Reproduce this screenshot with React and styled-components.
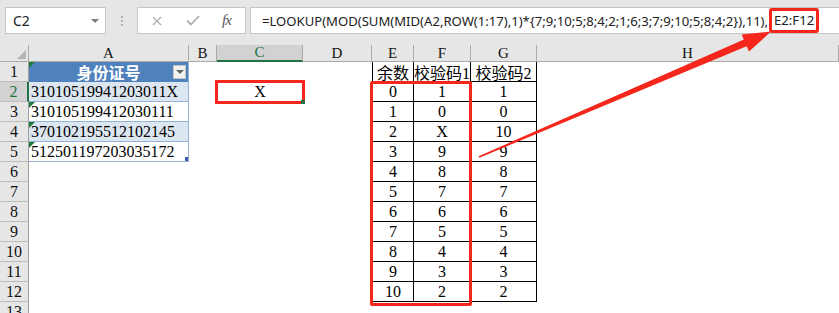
import React from 'react'
import styled, { createGlobalStyle, css } from 'styled-components'

const RED = '#f5261c'
const GREEN = '#217346'

const GlobalStyle = createGlobalStyle`
  html, body {
    margin: 0;
    padding: 0;
    overflow: hidden;
    background: #fff;
  }
  body {
    font-family: "Liberation Serif", "Noto Sans CJK SC", serif;
  }
`

const place = css`
  grid-row: ${p => p.$r};
  grid-column: ${p => p.$c};
`

const Page = styled.div`
  position: relative;
  width: 839px;
  height: 313px;
  overflow: hidden;
`

const TopBar = styled.div`
  height: 45px;
  box-sizing: border-box;
  background: #e6e6e6;
  display: flex;
  align-items: flex-start;
  padding: 7px 0 0 5px;
`

const NameBox = styled.div`
  width: 101px;
  height: 27px;
  box-sizing: border-box;
  background: #fff;
  border: 1px solid #c6c6c6;
  display: flex;
  align-items: center;
  justify-content: space-between;
  padding: 0 6px 0 7px;
  font: 14px "Noto Sans", "Liberation Sans", sans-serif;
  color: #222;
`

const Caret = styled.span`
  width: 0;
  height: 0;
  border-top: 4px solid #7a7a7a;
  border-left: 4px solid transparent;
  border-right: 4px solid transparent;
`

const Grip = styled.div`
  width: 31px;
  height: 27px;
  display: flex;
  flex-direction: column;
  align-items: center;
  justify-content: center;
  gap: 2px;
  span {
    width: 2px;
    height: 2px;
    background: #b3b3b3;
  }
`

const FxBox = styled.div`
  width: 109px;
  height: 27px;
  box-sizing: border-box;
  background: #fff;
  border: 1px solid #c6c6c6;
  display: flex;
  align-items: center;
  padding-left: 14px;
  svg.cancel { margin-right: 24px; }
  svg.enter { margin-right: 22px; }
`

const Fx = styled.span`
  font: italic 15px "Liberation Serif", serif;
  color: #555;
  letter-spacing: -1px;
`

const FormulaBox = styled.div`
  flex: 1;
  height: 27px;
  margin-left: 4px;
  box-sizing: border-box;
  background: #fff;
  border: 1px solid #c6c6c6;
  border-right: none;
  display: flex;
  align-items: center;
  padding-left: 11px;
  white-space: nowrap;
  overflow: hidden;
  font: 13.1px "Noto Sans", "Liberation Sans", sans-serif;
  color: #222;
`

const RangeRef = styled.span`
  display: inline-block;
  border: 3px solid ${RED};
  border-radius: 3px;
  padding: 0 2px;
  margin-left: 1px;
  line-height: 19px;
`

const Sheet = styled.div`
  display: grid;
  grid-template-columns: 29px 160px 28px 86px 69px 42px 57px 66px 1fr;
  grid-template-rows: 17px repeat(13, 20px);
`

const Corner = styled.div`
  ${place};
  background: #e6e6e6;
  border-right: 1px solid #ababab;
  border-bottom: 1px solid #ababab;
  position: relative;
  &::after {
    content: '';
    position: absolute;
    right: 2px;
    bottom: 2px;
    border-bottom: 9px solid #b4b4b4;
    border-left: 9px solid transparent;
  }
`

const ColHead = styled.div`
  ${place};
  background: ${p => (p.$active ? '#d2d2d2' : '#e6e6e6')};
  color: ${p => (p.$active ? GREEN : '#111')};
  border-right: 1px solid #ababab;
  border-bottom: ${p => (p.$active ? `2px solid ${GREEN}` : '1px solid #ababab')};
  display: flex;
  align-items: center;
  justify-content: center;
  font-size: 15px;
  line-height: 1;
`

const RowHead = styled.div`
  ${place};
  background: ${p => (p.$active ? '#d2d2d2' : '#e6e6e6')};
  color: ${p => (p.$active ? GREEN : '#111')};
  border-right: ${p => (p.$active ? `2px solid ${GREEN}` : '1px solid #9e9e9e')};
  border-bottom: 1px solid #bdbdbd;
  display: flex;
  align-items: center;
  justify-content: center;
  font-size: 16px;
`

const flagged = css`
  &::before {
    content: '';
    position: absolute;
    top: 0;
    left: 0;
    border-top: 6px solid #1d7a3a;
    border-right: 6px solid transparent;
  }
`

const IdHeader = styled.div`
  ${place};
  position: relative;
  background: #4f81bd;
  color: #fff;
  font: bold 16px "Noto Sans CJK SC", sans-serif;
  display: flex;
  align-items: center;
  justify-content: center;
  border-right: 1px solid #95b3d7;
  ${flagged};
`

const FilterButton = styled.span`
  position: absolute;
  right: 2px;
  top: 3px;
  width: 13px;
  height: 14px;
  box-sizing: border-box;
  background: #f2f2f2;
  border: 1px solid #c4c4c4;
  display: flex;
  align-items: center;
  justify-content: center;
  &::after {
    content: '';
    border-top: 4px solid #666;
    border-left: 4px solid transparent;
    border-right: 4px solid transparent;
  }
`

const IdCell = styled.div`
  ${place};
  position: relative;
  background: ${p => (p.$band ? '#dce6f1' : '#fff')};
  border-right: 1px solid #95b3d7;
  border-bottom: 1px solid #95b3d7;
  display: flex;
  align-items: center;
  padding-left: 2px;
  font-size: 16px;
  color: #000;
  ${p => p.$flag && flagged};
  ${p =>
    p.$last &&
    css`
      &::after {
        content: '';
        position: absolute;
        right: 0;
        bottom: 0;
        width: 3px;
        height: 4px;
        background: #3a59b0;
      }
    `};
`

const ResultCell = styled.div`
  ${place};
  position: relative;
  outline: 3px solid ${RED};
  outline-offset: -1px;
  display: flex;
  align-items: center;
  justify-content: center;
  font-size: 16px;
  &::after {
    content: '';
    position: absolute;
    right: -2px;
    bottom: -2px;
    width: 4px;
    height: 4px;
    background: ${GREEN};
    z-index: 2;
  }
`

const TableCell = styled.div`
  ${place};
  border-right: 1px solid #000;
  border-bottom: 1px solid #000;
  ${p => p.$first && 'border-left: 1px solid #000;'}
  display: flex;
  align-items: center;
  justify-content: center;
  font-size: 16px;
  color: #000;
  white-space: nowrap;
`

const RangeBox = styled.div`
  ${place};
  z-index: 3;
  border: 3px solid ${RED};
  border-radius: 2px;
  margin: -1px -1px -4px -2px;
  pointer-events: none;
`

const Arrow = styled.svg`
  position: absolute;
  left: 0;
  top: 0;
  z-index: 5;
  pointer-events: none;
`

const cols = ['A', 'B', 'C', 'D', 'E', 'F', 'G', 'H']
const ids = ['31010519941203011X', '310105199412030111', '370102195512102145', '512501197203035172']
const check1 = ['1', '0', 'X', '9', '8', '7', '6', '5', '4', '3', '2']
const check2 = ['1', '0', '10', '9', '8', '7', '6', '5', '4', '3', '2']

const App = () => {
  return (
    <Page>
      <GlobalStyle />
      <TopBar>
        <NameBox>
          C2
          <Caret />
        </NameBox>
        <Grip>
          <span />
          <span />
          <span />
        </Grip>
        <FxBox>
          <svg className="cancel" width="10" height="10" viewBox="0 0 10 10">
            <path d="M1 1 L9 9 M9 1 L1 9" stroke="#b0b0b0" strokeWidth="1.4" />
          </svg>
          <svg className="enter" width="14" height="11" viewBox="0 0 14 11">
            <path d="M1 5.5 L5 9.5 L13 1" stroke="#b0b0b0" strokeWidth="1.8" fill="none" />
          </svg>
          <Fx>fx</Fx>
        </FxBox>
        <FormulaBox>
          =LOOKUP(MOD(SUM(MID(A2,ROW(1:17),1)*{'{'}7;9;10;5;8;4;2;1;6;3;7;9;10;5;8;4;2{'}'}),11),
          <RangeRef>E2:F12</RangeRef>
        </FormulaBox>
      </TopBar>

      <Sheet>
        <Corner $r={1} $c={1} />
        {cols.map((c, i) => (
          <ColHead key={c} $r={1} $c={i + 2} $active={c === 'C'}>
            {c}
          </ColHead>
        ))}
        {Array.from({ length: 13 }, (_, i) => (
          <RowHead key={i} $r={i + 2} $c={1} $active={i === 1}>
            {i + 1}
          </RowHead>
        ))}

        <IdHeader $r={2} $c={2}>
          身份证号
          <FilterButton />
        </IdHeader>
        {ids.map((id, i) => (
          <IdCell key={id} $r={i + 3} $c={2} $band={i % 2 === 0} $flag={i > 0} $last={i === ids.length - 1}>
            {id}
          </IdCell>
        ))}

        <ResultCell $r={3} $c={4}>X</ResultCell>

        <TableCell $r={2} $c={6} $first>余数</TableCell>
        <TableCell $r={2} $c={7}>校验码1</TableCell>
        <TableCell $r={2} $c={8}>校验码2</TableCell>
        {check1.map((v, i) => (
          <React.Fragment key={i}>
            <TableCell $r={i + 3} $c={6} $first>{i}</TableCell>
            <TableCell $r={i + 3} $c={7}>{v}</TableCell>
            <TableCell $r={i + 3} $c={8}>{check2[i]}</TableCell>
          </React.Fragment>
        ))}
        <RangeBox $r="3 / 14" $c="6 / 8" />
      </Sheet>

      <Arrow width="839" height="313" viewBox="0 0 839 313">
        <polygon
          points="478.6,156.2 743.9,39.6 741.6,34.4 771,31.5 749,51.6 746.6,46.2 479.4,157.8"
          fill={RED}
        />
      </Arrow>
    </Page>
  )
}

export default App
